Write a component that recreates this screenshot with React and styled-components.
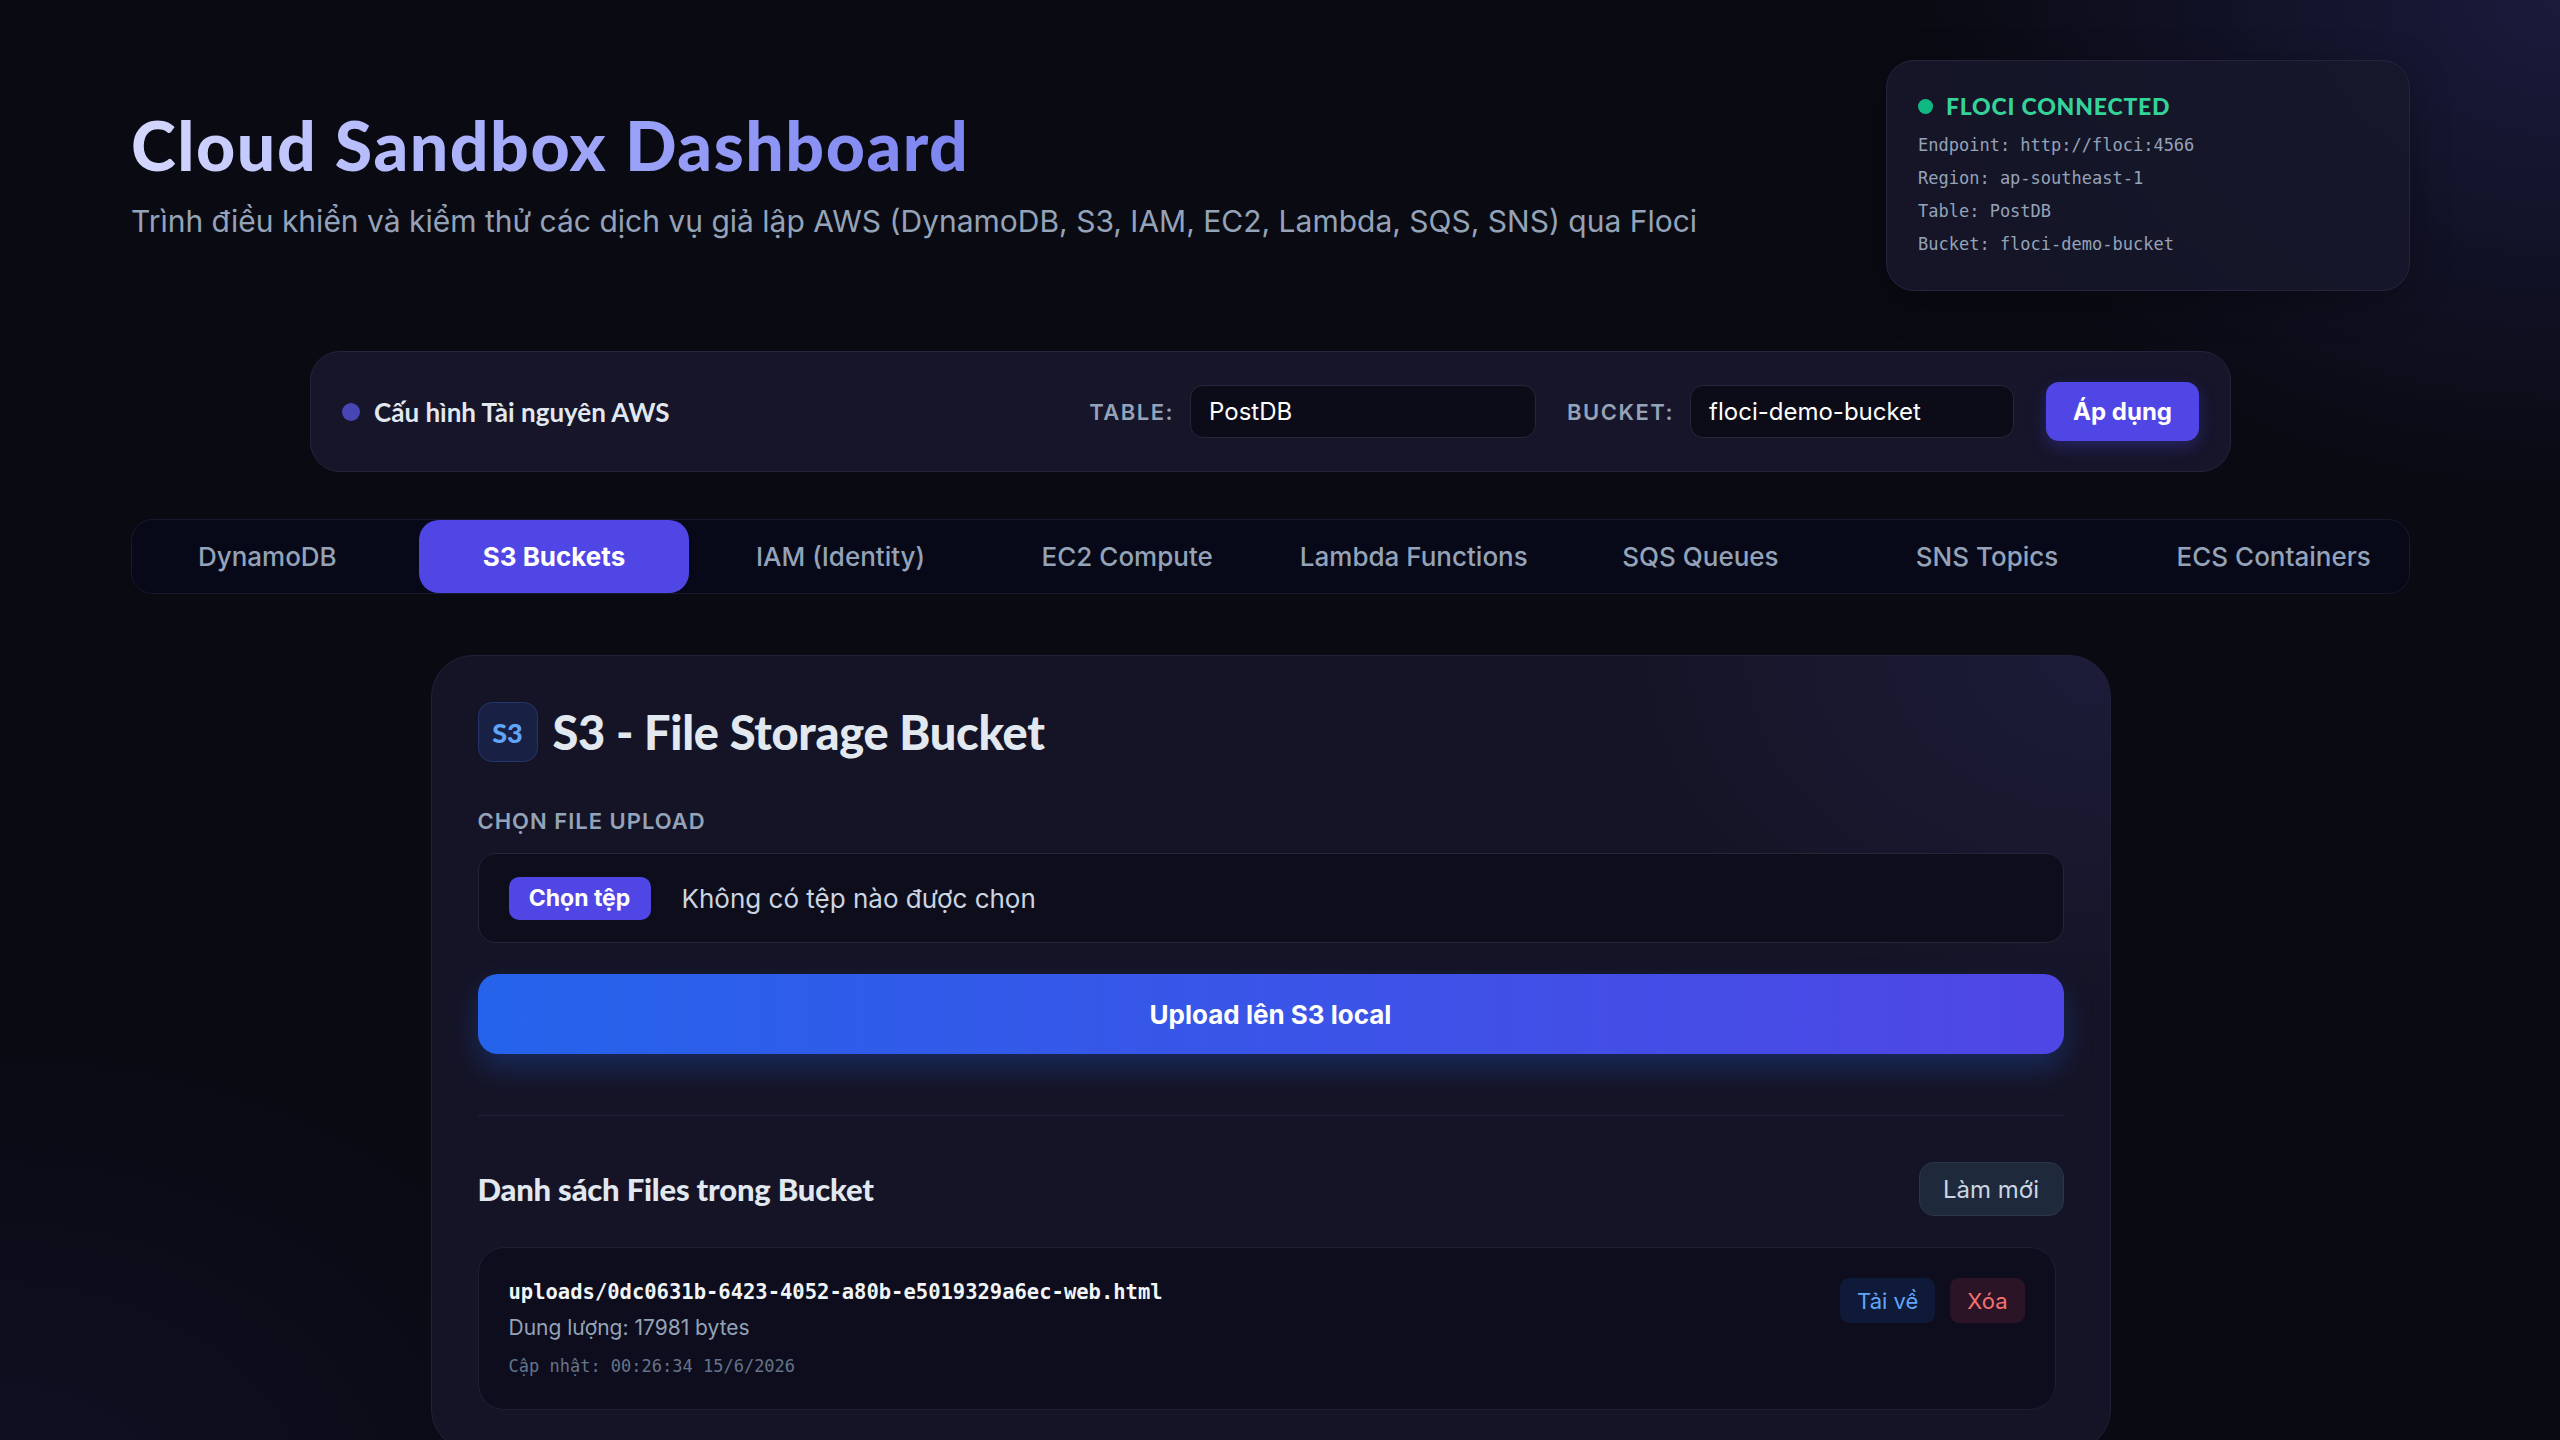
import React from "react";
import styled, { createGlobalStyle } from "styled-components";

const GlobalStyle = createGlobalStyle`
  html, body { margin: 0; padding: 0; }
  body {
    background: #0a0a13;
    font-family: Inter, "Noto Sans", sans-serif;
    color: #e2e8f0;
  }
  * { box-sizing: border-box; }
`;

const HEAD = `Lato, "Noto Sans", sans-serif`;
const MONO = `"DejaVu Sans Mono", "Liberation Mono", monospace`;

const Page = styled.div`
  min-height: 100vh;
  padding: 60px 0 80px;
  background:
    radial-gradient(ellipse 900px 700px at 100% 0%, rgba(40, 40, 95, 0.55), transparent 70%),
    radial-gradient(ellipse 900px 700px at 0% 100%, rgba(22, 22, 55, 0.5), transparent 70%),
    #0a0a13;
`;

const Container = styled.div`
  width: 2279px;
  margin-left: 131px;
`;

const Header = styled.header`
  display: flex;
  justify-content: space-between;
  align-items: flex-start;
`;

const TitleBlock = styled.div`
  padding-top: 44px;
`;

const Title = styled.h1`
  margin: 0;
  font-family: ${HEAD};
  font-weight: 900;
  font-size: 68px;
  line-height: 1.2;
  letter-spacing: 1.5px;
  background: linear-gradient(90deg, #d4d8ff 0%, #a5acfb 45%, #7c84f0 100%);
  -webkit-background-clip: text;
  background-clip: text;
  color: transparent;
  width: fit-content;
`;

const Subtitle = styled.p`
  margin: 14px 0 0;
  font-size: 30px;
  line-height: 1.4;
  color: #94a3b8;
`;

const StatusCard = styled.div`
  width: 524px;
  height: 231px;
  padding: 32px 31px;
  border-radius: 28px;
  background: rgba(24, 23, 44, 0.85);
  border: 1px solid #252440;
  box-shadow: 0 10px 40px rgba(0, 0, 0, 0.3);
`;

const StatusHead = styled.div`
  display: flex;
  align-items: center;
  gap: 13px;
  height: 26px;
  font-family: ${HEAD};
  font-weight: 900;
  font-size: 23px;
  letter-spacing: 0.8px;
  color: #34d399;
  margin-bottom: 10px;
`;

const Dot = styled.span`
  width: ${(p) => p.$size || 14}px;
  height: ${(p) => p.$size || 14}px;
  border-radius: 50%;
  background: ${(p) => p.$color};
  flex-shrink: 0;
`;

const MonoLine = styled.div`
  font-family: ${MONO};
  font-size: 17px;
  line-height: 33px;
  color: #94a3b8;
`;

const ConfigBar = styled.section`
  width: 1921px;
  height: 121px;
  margin: 60px auto 0;
  padding: 0 31px;
  display: flex;
  align-items: center;
  justify-content: space-between;
  border-radius: 30px;
  background: #16152a;
  border: 1px solid #25243c;
`;

const ConfigTitle = styled.div`
  display: flex;
  align-items: center;
  gap: 14px;
  font-family: ${HEAD};
  font-weight: 700;
  font-size: 26px;
  color: #e2e8f0;
`;

const ConfigFields = styled.div`
  display: flex;
  align-items: center;
`;

const FieldLabel = styled.label`
  font-size: 22px;
  font-weight: 600;
  letter-spacing: 1.5px;
  color: #94a3b8;
  margin-right: 16px;
  margin-left: ${(p) => p.$ml || 0}px;
`;

const TextInput = styled.div`
  width: ${(p) => p.$w}px;
  height: 53px;
  display: flex;
  align-items: center;
  padding: 0 18px;
  border-radius: 13px;
  background: #0c0b18;
  border: 1px solid #27263c;
  font-size: 24px;
  color: #ffffff;
`;

const PrimaryButton = styled.button`
  margin-left: 32px;
  height: 59px;
  padding: 0 27px;
  border: none;
  border-radius: 13px;
  background: #4f46e5;
  color: #fff;
  font-family: Inter, sans-serif;
  font-weight: 700;
  font-size: 24px;
  box-shadow: 0 6px 16px rgba(79, 70, 229, 0.3);
`;

const Tabs = styled.nav`
  margin-top: 47px;
  height: 75px;
  display: flex;
  gap: 16px;
  border-radius: 22px;
  background: #070919;
  border: 1px solid #171a2d;
`;

const Tab = styled.div`
  flex: 1;
  display: flex;
  align-items: center;
  justify-content: center;
  border-radius: 20px;
  font-size: 26px;
  font-weight: ${(p) => (p.$active ? 700 : 500)};
  color: ${(p) => (p.$active ? "#ffffff" : "#94a3b8")};
  background: ${(p) => (p.$active ? "#4f46e5" : "transparent")};
`;

const MainCard = styled.main`
  width: 1680px;
  margin: 61px auto 0;
  padding: 46px 46px 40px;
  border-radius: 42px;
  background:
    radial-gradient(ellipse 700px 500px at 100% 0%, rgba(38, 38, 80, 0.45), transparent 70%),
    #151426;
  border: 1px solid #22213a;
`;

const CardHeader = styled.div`
  display: flex;
  align-items: center;
  gap: 15px;
`;

const ServiceBadge = styled.div`
  width: 60px;
  height: 60px;
  border-radius: 14px;
  display: flex;
  align-items: center;
  justify-content: center;
  background: #182043;
  border: 1px solid #25346a;
  color: #60a5fa;
  font-family: ${HEAD};
  font-weight: 900;
  font-size: 27px;
`;

const CardTitle = styled.h2`
  margin: 0;
  font-family: ${HEAD};
  font-weight: 900;
  font-size: 47px;
  letter-spacing: -0.3px;
  color: #e2e8f0;
`;

const SectionLabel = styled.div`
  margin-top: 47px;
  font-size: 22px;
  line-height: 24px;
  font-weight: 600;
  letter-spacing: 1px;
  color: #94a3b8;
  text-transform: uppercase;
`;

const FileBox = styled.div`
  margin-top: 20px;
  height: 90px;
  display: flex;
  align-items: center;
  gap: 31px;
  padding: 0 30px;
  border-radius: 18px;
  background: #0e0d1c;
  border: 1px solid #25243a;
  font-size: 26px;
  color: #cbd5e1;
`;

const ChooseButton = styled.span`
  width: 142px;
  height: 43px;
  display: flex;
  align-items: center;
  justify-content: center;
  border-radius: 10px;
  background: #4f46e5;
  color: #fff;
  font-weight: 700;
  font-size: 23px;
`;

const UploadButton = styled.button`
  margin-top: 31px;
  width: 100%;
  height: 80px;
  border: none;
  border-radius: 20px;
  background: linear-gradient(90deg, #2563eb 0%, #4f46e5 100%);
  color: #fff;
  font-family: Inter, sans-serif;
  font-weight: 700;
  font-size: 26px;
  box-shadow: 0 14px 30px rgba(37, 99, 235, 0.28);
`;

const Divider = styled.hr`
  margin: 61px 0 0;
  border: none;
  height: 1px;
  background: #23223a;
`;

const ListHeader = styled.div`
  margin-top: 46px;
  display: flex;
  align-items: center;
  justify-content: space-between;
`;

const ListTitle = styled.h3`
  margin: 0;
  font-family: ${HEAD};
  font-weight: 900;
  font-size: 31px;
  letter-spacing: -0.2px;
  color: #e2e8f0;
`;

const GhostButton = styled.button`
  width: 145px;
  height: 54px;
  border-radius: 15px;
  background: #1e293b;
  border: 1px solid #2b3648;
  color: #cbd5e1;
  font-family: Inter, sans-serif;
  font-size: 24px;
`;

const FileList = styled.div`
  margin-top: 31px;
  margin-right: 8px;
`;

const FileItem = styled.div`
  display: flex;
  justify-content: space-between;
  align-items: flex-start;
  padding: 30px 30px 32px 30px;
  border-radius: 26px;
  background: #0e0d1d;
  border: 1px solid #1f1e33;
`;

const FileName = styled.div`
  font-family: ${MONO};
  font-weight: 700;
  font-size: 20.5px;
  line-height: 28px;
  color: #f1f5f9;
`;

const FileMeta = styled.div`
  margin-top: 7px;
  font-size: 21px;
  line-height: 30px;
  color: #94a3b8;
`;

const FileTime = styled.div`
  margin-top: 12px;
  font-family: ${MONO};
  font-size: 17px;
  line-height: 22px;
  color: #64748b;
`;

const Actions = styled.div`
  display: flex;
  gap: 15px;
`;

const SmallButton = styled.button`
  height: 45px;
  padding: 0 17px;
  border: none;
  border-radius: 9px;
  font-family: Inter, sans-serif;
  font-size: 22px;
  background: ${(p) => (p.$danger ? "#2a1425" : "#0f1a38")};
  color: ${(p) => (p.$danger ? "#f87171" : "#60a5fa")};
`;

const tabs = [
  "DynamoDB",
  "S3 Buckets",
  "IAM (Identity)",
  "EC2 Compute",
  "Lambda Functions",
  "SQS Queues",
  "SNS Topics",
  "ECS Containers",
];

export default function App() {
  return (
    <>
      <GlobalStyle />
      <Page>
        <Container>
          <Header>
            <TitleBlock>
              <Title>Cloud Sandbox Dashboard</Title>
              <Subtitle>
                Trình điều khiển và kiểm thử các dịch vụ giả lập AWS (DynamoDB, S3, IAM, EC2, Lambda, SQS, SNS) qua Floci
              </Subtitle>
            </TitleBlock>
            <StatusCard>
              <StatusHead>
                <Dot $color="#10b981" $size={15} />
                FLOCI CONNECTED
              </StatusHead>
              <MonoLine>Endpoint: http://floci:4566</MonoLine>
              <MonoLine>Region: ap-southeast-1</MonoLine>
              <MonoLine>Table: PostDB</MonoLine>
              <MonoLine>Bucket: floci-demo-bucket</MonoLine>
            </StatusCard>
          </Header>

          <ConfigBar>
            <ConfigTitle>
              <Dot $color="#4845b5" $size={18} />
              Cấu hình Tài nguyên AWS
            </ConfigTitle>
            <ConfigFields>
              <FieldLabel>TABLE:</FieldLabel>
              <TextInput $w={346}>PostDB</TextInput>
              <FieldLabel $ml={31}>BUCKET:</FieldLabel>
              <TextInput $w={324}>floci-demo-bucket</TextInput>
              <PrimaryButton>Áp dụng</PrimaryButton>
            </ConfigFields>
          </ConfigBar>

          <Tabs>
            {tabs.map((t) => (
              <Tab key={t} $active={t === "S3 Buckets"}>
                {t}
              </Tab>
            ))}
          </Tabs>

          <MainCard>
            <CardHeader>
              <ServiceBadge>S3</ServiceBadge>
              <CardTitle>S3 - File Storage Bucket</CardTitle>
            </CardHeader>

            <SectionLabel>Chọn file upload</SectionLabel>
            <FileBox>
              <ChooseButton>Chọn tệp</ChooseButton>
              Không có tệp nào được chọn
            </FileBox>

            <UploadButton>Upload lên S3 local</UploadButton>

            <Divider />

            <ListHeader>
              <ListTitle>Danh sách Files trong Bucket</ListTitle>
              <GhostButton>Làm mới</GhostButton>
            </ListHeader>

            <FileList>
              <FileItem>
                <div>
                  <FileName>uploads/0dc0631b-6423-4052-a80b-e5019329a6ec-web.html</FileName>
                  <FileMeta>Dung lượng: 17981 bytes</FileMeta>
                  <FileTime>Cập nhật: 00:26:34 15/6/2026</FileTime>
                </div>
                <Actions>
                  <SmallButton>Tải về</SmallButton>
                  <SmallButton $danger>Xóa</SmallButton>
                </Actions>
              </FileItem>
            </FileList>
          </MainCard>
        </Container>
      </Page>
    </>
  );
}
